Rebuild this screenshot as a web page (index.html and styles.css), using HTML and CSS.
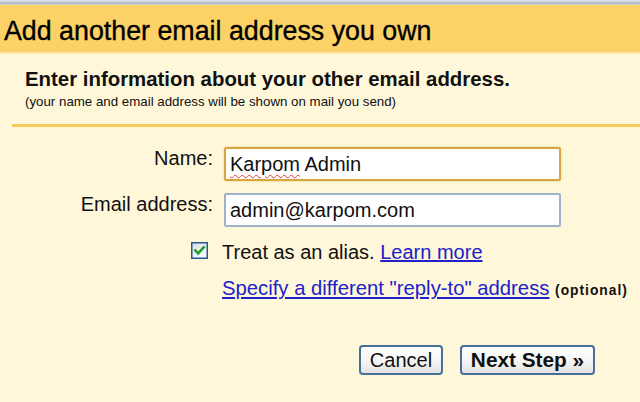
FILE: index.html
```html
<!DOCTYPE html>
<html>
<head>
<meta charset="utf-8">
<link rel="stylesheet" href="styles.css">
</head>
<body>
<div class="topbar"></div>
<div class="header"><h1>Add another email address you own</h1></div>
<div class="content">
  <div class="intro">
    <div class="title">Enter information about your other email address.</div>
    <div class="note">(your name and email address will be shown on mail you send)</div>
  </div>
  <div class="divider"></div>
  <div class="form">
    <div class="label">Name:</div>
    <div class="field focused"><span class="misspelled">Karpom</span> Admin</div>
    <div class="label">Email address:</div>
    <div class="field">admin@karpom.com</div>
    <div class="check-cell">
      <svg class="checkbox" width="17" height="17" viewBox="0 0 17 17">
        <defs>
          <linearGradient id="cbg" x1="0" y1="0" x2="1" y2="1">
            <stop offset="0" stop-color="#d9dee5"/>
            <stop offset="1" stop-color="#ffffff"/>
          </linearGradient>
        </defs>
        <rect x="0.75" y="0.75" width="15.5" height="15.5" fill="url(#cbg)" stroke="#2a5a88" stroke-width="1.5"/>
        <path d="M4.2 8.4 L7.1 11.4 L12.8 5.2" stroke="#1fa01f" stroke-width="2.4" fill="none" stroke-linecap="square"/>
      </svg>
    </div>
    <div class="text-cell alias">Treat as an alias. <a class="link" href="#">Learn more</a></div>
    <div class="text-cell span2 reply"><a class="link" href="#">Specify a different "reply-to" address</a> <span class="optional">(optional)</span></div>
  </div>
  <div class="actions">
    <button class="btn cancel">Cancel</button>
    <button class="btn next">Next Step &raquo;</button>
  </div>
</div>
</body>
</html>
```
FILE: styles.css
```css
html, body {
  margin: 0;
  padding: 0;
}
body {
  width: 640px;
  height: 402px;
  overflow: hidden;
  background: #fff7d9;
  font-family: "Liberation Sans", Arial, sans-serif;
  color: #111;
}
.topbar {
  height: 5px;
  background: linear-gradient(#e6e9ee 0%, #c3c8d0 40%, #b6bbc4 70%, #dcdfe4 100%);
}
.header {
  box-sizing: border-box;
  height: 49px;
  background: #fcd267;
  border-bottom: 2px solid #fee9a9;
  padding: 6px 0 0 4px;
}
.header h1 {
  margin: 0;
  font-size: 26.8px;
  font-weight: normal;
  line-height: 41px;
  color: #000;
  -webkit-text-stroke: 0.35px #000;
}
.content {
  padding-top: 14px;
}
.intro {
  padding-left: 25px;
}
.title {
  font-size: 20.4px;
  font-weight: bold;
  line-height: 23px;
}
.note {
  font-size: 13.3px;
  line-height: 15px;
  margin-top: 3px;
}
.divider {
  margin: 15px 0 0 12px;
  height: 3px;
  background: #f8c95a;
}
.form {
  display: grid;
  grid-template-columns: 213px 339px;
  column-gap: 9px;
  row-gap: 12px;
  margin-top: 20px;
}
.label {
  text-align: right;
  font-size: 20px;
  line-height: 23px;
  align-self: start;
}
.field {
  box-sizing: border-box;
  width: 337px;
  height: 34px;
  margin-left: 2px;
  border: 2px solid #9eb3c9;
  border-radius: 2px;
  background: #fff;
  padding: 0 4px;
  font-size: 20px;
  line-height: 30px;
  color: #111;
}
.field.focused {
  border-color: #d9a440;
  box-shadow: 0 0 2px #f0c36a;
}
.misspelled {
  text-decoration: underline wavy #e03a3a;
  text-decoration-thickness: 1px;
  text-underline-offset: 3px;
}
.check-cell {
  justify-self: end;
  margin-right: 5px;
  margin-top: 3px;
  height: 17px;
}
.checkbox {
  display: block;
}
.text-cell {
  font-size: 20px;
  line-height: 23px;
}
.alias {
  margin-top: 2px;
}
.reply {
  margin-top: 1px;
  font-size: 20.3px;
}
.span2 {
  grid-column: 2;
  white-space: nowrap;
}
.link {
  color: #2020cc;
  text-decoration: underline;
}
.optional {
  font-size: 13.8px;
  font-weight: bold;
  letter-spacing: 1px;
}
.actions {
  display: flex;
  justify-content: flex-end;
  gap: 17px;
  padding-right: 45px;
  margin-top: 43px;
}
.btn {
  box-sizing: border-box;
  height: 30px;
  padding: 0;
  border: 2px solid #46709a;
  border-radius: 4px;
  background: linear-gradient(#ffffff 0%, #f6f6f6 50%, #e3e3e3 100%);
  font-family: "Liberation Sans", Arial, sans-serif;
  font-size: 20px;
  line-height: 26px;
  color: #111;
  text-align: center;
}
.cancel {
  width: 84px;
}
.next {
  width: 135px;
  font-weight: bold;
  font-size: 20.8px;
}
```
